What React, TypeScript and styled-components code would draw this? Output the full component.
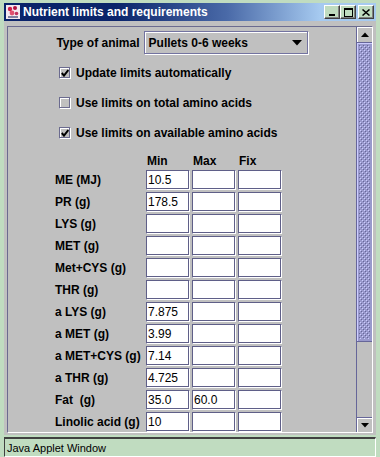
import React from "react";
import styled, { createGlobalStyle } from "styled-components";

const Global = createGlobalStyle`
  html, body { margin: 0; padding: 0; }
  body {
    width: 380px; height: 457px; overflow: hidden;
    background: #c0dcc0;
    font-family: "Liberation Sans", Arial, sans-serif;
  }
`;

const Win = styled.div`
  width: 380px; height: 457px; box-sizing: border-box;
  background: #c0dcc0;
  padding: 3px 4px 0 4px;
  display: flex; flex-direction: column;
`;

const TitleBar = styled.div`
  height: 18px; flex: 0 0 18px;
  display: flex; align-items: center;
  padding: 0 2px 0 1px;
  background: linear-gradient(to right, #0a246a 0%, #0a246a 30%, #4a6aa8 60%, #a6caf0 85%, #a6caf0 100%);
`;

const TitleText = styled.span`
  color: #fff; font-weight: bold; font-size: 12px;
  margin-left: 2px; flex: 1; white-space: nowrap;
`;

const CapBtn = styled.div<{ $gap?: boolean }>`
  width: 16px; height: 14px; box-sizing: border-box;
  margin-left: ${p => (p.$gap ? "2px" : "0")};
  background: #c0dcc0;
  border-top: 1px solid #fff; border-left: 1px solid #fff;
  border-right: 1px solid #404040; border-bottom: 1px solid #404040;
  box-shadow: inset -1px -1px 0 #808080;
  display: flex; align-items: center; justify-content: center;
`;

const Frame = styled.div`
  flex: 0 0 410px; box-sizing: border-box;
  background: #c0c0c0;
  padding: 5px 3px 2px 3px;
  display: flex;
`;

const ScrollPane = styled.div`
  flex: 1; display: flex; box-sizing: border-box;
  border-top: 1px solid #6b6b8f; border-left: 1px solid #6b6b8f;
  border-right: 1px solid #fff; border-bottom: 1px solid #fff;
  overflow: hidden;
`;

const Viewport = styled.div`
  flex: 1; overflow: hidden; background: #c0c0c0;
  padding-top: 4px; box-sizing: border-box;
`;

const ComboRow = styled.div`
  display: flex; align-items: center; justify-content: center; gap: 4px;
  height: 23px;
`;

const Label = styled.span`
  font-size: 12px; font-weight: bold; color: #000; white-space: pre;
`;

const Combo = styled.div`
  width: 164px; height: 23px; box-sizing: border-box;
  border: 1px solid #7373a0;
  box-shadow: inset 1px 1px 0 #fff, 1px 1px 0 #fff;
  background: #c0c0c0;
  display: flex; align-items: center; justify-content: space-between;
  padding: 0 5px 0 4px;
  font-size: 12px; font-weight: bold; color: #000;
`;

const Checks = styled.div`
  margin-top: 10px; padding-left: 51px;
  display: flex; flex-direction: column; gap: 12px;
`;

const CheckRow = styled.div`
  height: 18px; display: flex; align-items: center; gap: 5px;
`;

const Box = styled.div`
  width: 12px; height: 12px; box-sizing: border-box;
  border-top: 1px solid #6b6b8f; border-left: 1px solid #6b6b8f;
  border-right: 1px solid #fff; border-bottom: 1px solid #fff;
  box-shadow: inset -1px -1px 0 #6b6b8f, inset 1px 1px 0 #fff;
  display: flex; align-items: center; justify-content: center;
`;

const Table = styled.div`
  margin-top: 11px; padding-left: 47px;
  display: grid;
  grid-template-columns: 89px 44px 44px 44px;
  column-gap: 2px;
  row-gap: 2px;
`;

const Head = styled.div`
  height: 16px; display: flex; align-items: center;
  font-size: 12px; font-weight: bold; padding-left: 1px;
  margin-bottom: -1px;
`;

const RowLabel = styled.div`
  height: 20px; display: flex; align-items: center;
  font-size: 12px; font-weight: bold; white-space: pre;
`;

const Field = styled.div`
  height: 20px; box-sizing: border-box;
  border-top: 1px solid #5f5f88; border-left: 1px solid #5f5f88;
  border-right: 1px solid #fff; border-bottom: 1px solid #fff;
  box-shadow: inset -1px -1px 0 #5f5f88;
  background: #fff;
  font-size: 12px; color: #000;
  display: flex; align-items: center; padding-left: 1px;
`;

const ScrollBar = styled.div`
  width: 16px; box-sizing: border-box;
  border-left: 1px solid #666699;
  display: flex; flex-direction: column;
  background: #c0c0c0;
`;

const ArrowBtn = styled.div<{ $down?: boolean }>`
  height: 15px; flex: 0 0 15px; box-sizing: border-box;
  background: #c0c0c0;
  border-top: ${p => (p.$down ? "1px solid #666699" : "none")};
  box-shadow: inset 1px 1px 0 #fff;
  display: flex; align-items: center; justify-content: center;
`;

const Thumb = styled.div`
  height: 300px; flex: 0 0 300px; box-sizing: border-box;
  border-top: 1px solid #666699; border-bottom: 1px solid #666699;
  background: #9999cc;
  box-shadow: inset 1px 1px 0 #ccccff;
  display: flex; overflow: hidden;
`;

const Track = styled.div`
  flex: 1; background: #c0c0c0;
`;

const Status = styled.div`
  margin-top: 2px; height: 20px; flex: 0 0 20px; box-sizing: border-box;
  border-top: 2px solid #404040; border-left: 1px solid #404040;
  border-right: 1px solid #fff; border-bottom: 1px solid #fff;
  display: flex; align-items: center; padding-left: 2px;
  font-size: 11px; color: #000;
`;

const rows: [string, string, string, string][] = [
  ["ME (MJ)", "10.5", "", ""],
  ["PR (g)", "178.5", "", ""],
  ["LYS (g)", "", "", ""],
  ["MET (g)", "", "", ""],
  ["Met+CYS (g)", "", "", ""],
  ["THR (g)", "", "", ""],
  ["a LYS (g)", "7.875", "", ""],
  ["a MET (g)", "3.99", "", ""],
  ["a MET+CYS (g)", "7.14", "", ""],
  ["a THR (g)", "4.725", "", ""],
  ["Fat  (g)", "35.0", "60.0", ""],
  ["Linolic acid (g)", "10", "", ""],
];

const Check = ({ on, label }: { on: boolean; label: string }) => (
  <CheckRow>
    <Box>
      {on && (
        <svg width="8" height="8" viewBox="0 0 8 8">
          <path d="M0.8 4 L3 6.6 L7.3 1" stroke="#000" strokeWidth="2" fill="none" />
        </svg>
      )}
    </Box>
    <Label>{label}</Label>
  </CheckRow>
);

const AppIcon = () => (
  <svg width="16" height="16" viewBox="0 0 16 16">
    <rect x="1" y="1" width="14" height="14" fill="#f4e8f0" />
    <circle cx="5" cy="5" r="2.2" fill="#d0204a" />
    <circle cx="10" cy="4" r="2" fill="#b01040" />
    <circle cx="7" cy="9" r="2.4" fill="#e05070" />
    <circle cx="11.5" cy="9.5" r="1.8" fill="#c03060" />
    <rect x="3" y="12" width="10" height="2" fill="#8080a0" />
  </svg>
);

export default function App() {
  return (
    <>
      <Global />
      <Win>
        <TitleBar>
          <AppIcon />
          <TitleText>Nutrient limits and requirements</TitleText>
          <CapBtn>
            <svg width="8" height="8" viewBox="0 0 8 8"><rect x="1" y="6" width="6" height="2" fill="#000" /></svg>
          </CapBtn>
          <CapBtn>
            <svg width="9" height="9" viewBox="0 0 9 9"><rect x="0.5" y="0.5" width="8" height="8" fill="none" stroke="#000" /><rect x="0" y="0" width="9" height="2" fill="#000" /></svg>
          </CapBtn>
          <CapBtn $gap>
            <svg width="8" height="7" viewBox="0 0 8 7"><path d="M0.5 0.5 L7.5 6.5 M7.5 0.5 L0.5 6.5" stroke="#000" strokeWidth="1.5" /></svg>
          </CapBtn>
        </TitleBar>
        <Frame>
          <ScrollPane>
            <Viewport>
              <ComboRow>
                <Label>Type of animal</Label>
                <Combo>
                  <span>Pullets 0-6 weeks</span>
                  <svg width="10" height="6" viewBox="0 0 10 6"><path d="M0 0 H10 L5 5.5 Z" fill="#000" /></svg>
                </Combo>
              </ComboRow>
              <Checks>
                <Check on label="Update limits automatically" />
                <Check on={false} label="Use limits on total amino acids" />
                <Check on label="Use limits on available amino acids" />
              </Checks>
              <Table>
                <Head />
                <Head>Min</Head>
                <Head>Max</Head>
                <Head>Fix</Head>
                {rows.map(r => (
                  <React.Fragment key={r[0]}>
                    <RowLabel>{r[0]}</RowLabel>
                    <Field>{r[1]}</Field>
                    <Field>{r[2]}</Field>
                    <Field>{r[3]}</Field>
                  </React.Fragment>
                ))}
              </Table>
            </Viewport>
            <ScrollBar>
              <ArrowBtn>
                <svg width="8" height="5" viewBox="0 0 8 5"><path d="M0 5 H8 L4 0.5 Z" fill="#000" /></svg>
              </ArrowBtn>
              <Thumb>
                <svg width="15" height="300">
                  <defs>
                    <pattern id="bumps" width="4" height="4" patternUnits="userSpaceOnUse" x="1" y="1">
                      <rect x="0" y="0" width="1" height="1" fill="#ccccff" />
                      <rect x="2" y="2" width="1" height="1" fill="#ccccff" />
                      <rect x="1" y="1" width="1" height="1" fill="#666699" />
                      <rect x="3" y="3" width="1" height="1" fill="#666699" />
                    </pattern>
                  </defs>
                  <rect x="2" y="2" width="11" height="294" fill="url(#bumps)" />
                </svg>
              </Thumb>
              <Track />
              <ArrowBtn $down>
                <svg width="8" height="5" viewBox="0 0 8 5"><path d="M0 0 H8 L4 4.5 Z" fill="#000" /></svg>
              </ArrowBtn>
            </ScrollBar>
          </ScrollPane>
        </Frame>
        <Status>Java Applet Window</Status>
      </Win>
    </>
  );
}
